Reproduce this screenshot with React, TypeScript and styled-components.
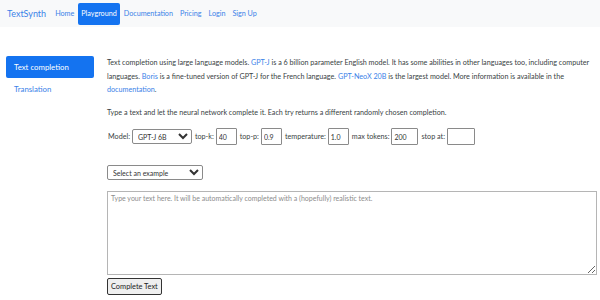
import * as React from "react";
import styled, { createGlobalStyle } from "styled-components";

const GlobalStyle = createGlobalStyle`
  body {
    margin: 0;
    background: #fff;
    font-family: Lato, "Noto Sans", sans-serif;
    color: #3a3f44;
  }
`;

const navItems = ["Home", "Playground", "Documentation", "Pricing", "Login", "Sign Up"];

export default function App() {
  return (
    <>
      <GlobalStyle />
      <Navbar>
        <Brand>TextSynth</Brand>
        <NavList>
          {navItems.map((item) => (
            <NavLink key={item} $active={item === "Playground"}>
              {item}
            </NavLink>
          ))}
        </NavList>
      </Navbar>
      <Layout>
        <Sidebar>
          <SideLink $active>Text completion</SideLink>
          <SideLink>Translation</SideLink>
        </Sidebar>
        <Main>
          <Paragraph>
            Text completion using large language models. <Link>GPT-J</Link> is a 6 billion
            parameter English model. It has some abilities in other languages too, including
            computer languages. <Link>Boris</Link> is a fine-tuned version of GPT-J for the
            French language. <Link>GPT-NeoX 20B</Link> is the largest model. More information
            is available in the <Link>documentation</Link>.
          </Paragraph>
          <Paragraph>
            Type a text and let the neural network complete it. Each try returns a different
            randomly chosen completion.
          </Paragraph>
          <ParamRow>
            <label>Model:</label>
            <Select $width={60} defaultValue="gptj">
              <option value="gptj">GPT-J 6B</option>
            </Select>
            <label>top-k:</label>
            <NumInput defaultValue="40" />
            <label>top-p:</label>
            <NumInput defaultValue="0.9" />
            <label>temperature:</label>
            <NumInput defaultValue="1.0" />
            <label>max tokens:</label>
            <NumInput $width={27} defaultValue="200" />
            <label>stop at:</label>
            <NumInput $width={28} defaultValue="" />
          </ParamRow>
          <ExampleRow>
            <Select $width={96} defaultValue="">
              <option value="">Select an example</option>
            </Select>
          </ExampleRow>
          <TextArea placeholder="Type your text here. It will be automatically completed with a (hopefully) realistic text." />
          <SubmitButton>Complete Text</SubmitButton>
        </Main>
      </Layout>
    </>
  );
}

const Navbar = styled.nav`
  display: flex;
  align-items: center;
  height: 27px;
  padding: 0 7px;
  background: #f8f9fa;
`;

const Brand = styled.span`
  font-size: 9px;
  color: #3b82e8;
  margin-right: 6px;
`;

const NavList = styled.div`
  display: flex;
  align-items: center;
  gap: 1px;
`;

const NavLink = styled.span<{ $active?: boolean }>`
  font-size: 7.2px;
  padding: 0 3px;
  height: 22px;
  line-height: 22px;
  border-radius: 2px;
  color: ${(p) => (p.$active ? "#fff" : "#3b82e8")};
  background: ${(p) => (p.$active ? "#1473f0" : "transparent")};
`;

const Layout = styled.div`
  display: flex;
  padding: 29px 3px 0 6px;
`;

const Sidebar = styled.div`
  display: flex;
  flex-direction: column;
  width: 88px;
  flex-shrink: 0;
  margin-right: 13px;
`;

const SideLink = styled.div<{ $active?: boolean }>`
  font-size: 7.8px;
  height: 22px;
  line-height: 22px;
  padding: 0 8px;
  border-radius: 2px;
  color: ${(p) => (p.$active ? "#fff" : "#3b82e8")};
  background: ${(p) => (p.$active ? "#1473f0" : "transparent")};
`;

const Main = styled.div`
  flex: 1;
  display: flex;
  flex-direction: column;
  font-size: 7.2px;
`;

const Paragraph = styled.p`
  margin: 0 0 9px;
  line-height: 13.5px;
`;

const Link = styled.a`
  display: inline-block;
  color: #3b82e8;
`;

const ParamRow = styled.div`
  display: flex;
  align-items: center;
  gap: 2px;
  height: 17px;

  label {
    margin-left: 1px;
  }
`;

const Select = styled.select<{ $width: number }>`
  width: ${(p) => p.$width}px;
  height: 15px;
  font: inherit;
  font-size: 7px;
  padding: 0 1px;
  border: 1px solid #8a8a8a;
  border-radius: 2px;
  background: #fff;
  color: #333;
`;

const NumInput = styled.input<{ $width?: number }>`
  width: ${(p) => p.$width ?? 21}px;
  height: 17px;
  box-sizing: border-box;
  font: inherit;
  font-size: 7px;
  padding: 0 2px;
  border: 1px solid #8a8a8a;
  border-radius: 1px;
  color: #333;
`;

const ExampleRow = styled.div`
  display: flex;
  margin-top: 20px;
`;

const TextArea = styled.textarea`
  margin-top: 11px;
  height: 84px;
  box-sizing: border-box;
  font: inherit;
  font-size: 7px;
  padding: 2px 3px;
  border: 1px solid #b5b5b5;
  resize: vertical;

  &::placeholder {
    color: #8c8c8c;
  }
`;

const SubmitButton = styled.button`
  align-self: flex-start;
  margin-top: 3px;
  height: 17px;
  padding: 0 3px;
  font: inherit;
  font-size: 7.4px;
  color: #222;
  background: #efefef;
  border: 1px solid #333;
  border-radius: 2px;
`;
